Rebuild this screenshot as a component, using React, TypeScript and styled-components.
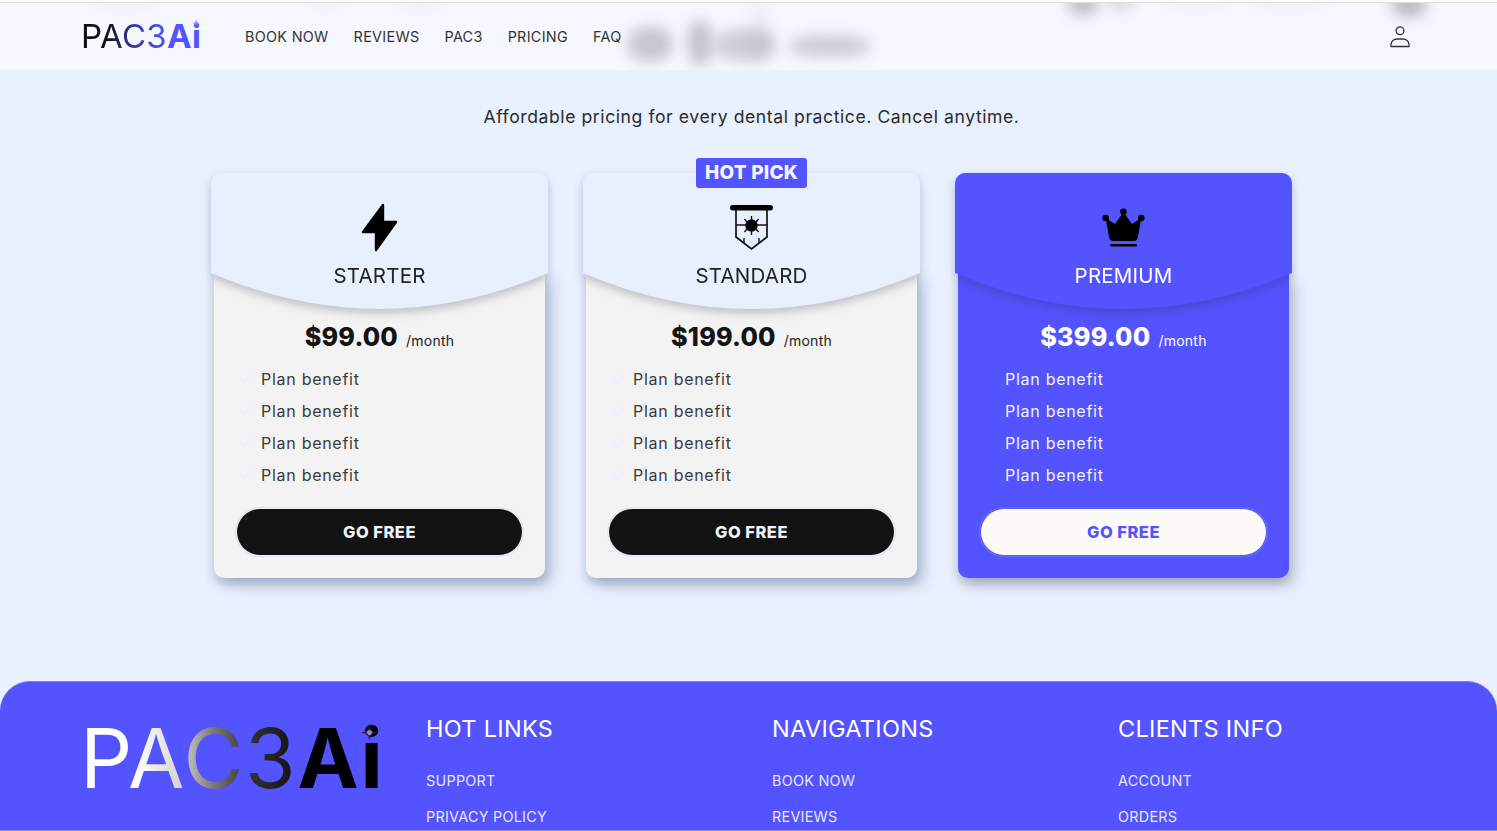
import React from "react";
import styled, { createGlobalStyle } from "styled-components";
import { Check } from "lucide-react";

const Global = createGlobalStyle`
  html, body { margin: 0; padding: 0; background: #e9f0fe; }
  * { box-sizing: border-box; }
`;

const font = `"Inter", "Noto Sans", "Liberation Sans", sans-serif`;
const brand = "#5353ff";

const Page = styled.div`
  width: 1497px;
  height: 831px;
  display: flex;
  flex-direction: column;
  overflow: hidden;
  background: #e9f0fe;
  font-family: ${font};
  color: #222;
`;

const TopEdge = styled.div`
  height: 3px;
  background: #fff;
  border-bottom: 1px solid #dcdfe0;
  flex: none;
`;

const Header = styled.header`
  position: relative;
  height: 67px;
  flex: none;
  display: flex;
  align-items: center;
  padding: 0 86px 0 81px;
  background: #f5f8ff;
  overflow: hidden;
`;

const Smudge = styled.div<{ $x: number; $y: number; $w: number; $h: number; $o: number }>`
  position: absolute;
  left: ${(p) => p.$x}px;
  top: ${(p) => p.$y}px;
  width: ${(p) => p.$w}px;
  height: ${(p) => p.$h}px;
  border-radius: 40%;
  background: rgba(60, 60, 70, ${(p) => p.$o});
  filter: blur(7px);
`;

const LogoWrap = styled.div<{ $size: number; $width: number; $track: number }>`
  position: relative;
  z-index: 1;
  display: inline-flex;
  flex: none;
  width: ${(p) => p.$width}px;
  font-size: ${(p) => p.$size}px;
  line-height: 1;
  letter-spacing: ${(p) => p.$track}px;
  font-weight: 400;
`;

const LogoLight = styled.span<{ $bg: string }>`
  background: ${(p) => p.$bg};
  -webkit-background-clip: text;
  background-clip: text;
  color: transparent;
`;

const LogoStrong = styled.span<{ $color: string }>`
  font-weight: 700;
  color: ${(p) => p.$color};
`;

const Spark = styled.svg<{ $left: number; $top: number; $size: number }>`
  position: absolute;
  left: ${(p) => p.$left}px;
  top: ${(p) => p.$top}px;
  width: ${(p) => p.$size}px;
  height: ${(p) => p.$size}px;
`;

const Nav = styled.nav`
  position: relative;
  z-index: 1;
  display: flex;
  gap: 25px;
  margin-left: 45px;
  font-size: 14.4px;
  color: #333;
  letter-spacing: 0.3px;
`;

const UserButton = styled.div`
  position: relative;
  z-index: 1;
  margin-left: auto;
  width: 22px;
  height: 22px;
  color: #333;
  display: flex;
`;

const Main = styled.main`
  flex: 1;
  display: flex;
  flex-direction: column;
  align-items: center;
  padding: 36px 0 0 6px;
`;

const Lead = styled.p`
  margin: 0;
  font-size: 17.6px;
  line-height: 22px;
  letter-spacing: 0.57px;
  color: #2b2b2b;
`;

const CardRow = styled.div`
  display: flex;
  gap: 35px;
  margin-top: 45px;
`;

const Card = styled.article`
  position: relative;
  width: 337px;
  height: 405px;
  display: flex;
  flex-direction: column;
`;

const CapWrap = styled.div`
  position: relative;
  z-index: 2;
  height: 136px;
  flex: none;
  filter: drop-shadow(0 4px 5px rgba(40, 40, 60, 0.26));
`;

const Cap = styled.div<{ $premium?: boolean }>`
  height: 136px;
  padding-top: 28px;
  display: flex;
  flex-direction: column;
  align-items: center;
  background: ${(p) => (p.$premium ? brand : "#e8f0fe")};
  color: ${(p) => (p.$premium ? "#fff" : "#222")};
  clip-path: path("M0 10 A10 10 0 0 1 10 0 H327 A10 10 0 0 1 337 10 V100 Q168.5 172 0 100 Z");
`;

const IconBox = styled.div<{ $drop: number }>`
  width: 48px;
  height: 52px;
  padding-top: ${(p) => p.$drop}px;
  display: flex;
  align-items: flex-start;
  justify-content: center;
`;

const PlanName = styled.h3`
  margin: 10px 0 0;
  font-size: 20.5px;
  line-height: 26px;
  font-weight: 400;
  letter-spacing: 0.2px;
`;

const Badge = styled.div`
  position: absolute;
  z-index: 3;
  top: -15px;
  left: 113px;
  width: 111px;
  height: 30px;
  border-radius: 3px;
  background: ${brand};
  color: #f4f6ff;
  font-size: 19px;
  line-height: 30px;
  font-weight: 800;
  text-align: center;
  letter-spacing: 0.2px;
`;

const Body = styled.div<{ $premium?: boolean }>`
  flex: 1;
  margin: -36px 3px 0;
  padding: 49px 23px 0;
  display: flex;
  flex-direction: column;
  border-radius: 0 0 10px 10px;
  background: ${(p) => (p.$premium ? brand : "#f3f3f3")};
  color: ${(p) => (p.$premium ? "#fff" : "#222")};
  box-shadow: ${(p) =>
    p.$premium
      ? "5px 7px 14px rgba(50,60,90,0.3), -2px 5px 9px rgba(50,60,90,0.14)"
      : "6px 7px 14px rgba(60,80,120,0.34), -2px 5px 9px rgba(60,80,120,0.16)"};
`;

const PriceLine = styled.div`
  display: flex;
  justify-content: center;
  align-items: baseline;
  gap: 8px;
  height: 30px;
`;

const Amount = styled.span<{ $premium?: boolean }>`
  font-size: 25.2px;
  line-height: 30px;
  font-weight: 800;
  letter-spacing: 0.2px;
  color: ${(p) => (p.$premium ? "#fff" : "#141414")};
`;

const Per = styled.span`
  font-size: 14px;
  letter-spacing: 0.25px;
`;

const Benefits = styled.ul`
  list-style: none;
  margin: 11px 0 0;
  padding: 0;
  display: flex;
  flex-direction: column;
`;

const Benefit = styled.li<{ $premium?: boolean }>`
  height: 32px;
  display: flex;
  align-items: center;
  gap: 6px;
  font-size: 16px;
  letter-spacing: 0.72px;
  color: ${(p) => (p.$premium ? "#f2f4ff" : "#3a3a3a")};
  svg {
    flex: none;
    color: ${(p) => (p.$premium ? brand : "#e6eefe")};
  }
`;

const Cta = styled.button<{ $premium?: boolean }>`
  margin: 18px 0 0;
  width: 285px;
  height: 46px;
  border: 0;
  border-radius: 23px;
  background: ${(p) => (p.$premium ? "#fcfbf8" : "#121212")};
  color: ${(p) => (p.$premium ? brand : "#eef2fd")};
  box-shadow: 0 0 0 1px ${(p) => (p.$premium ? brand : "#f3f3f3")},
    0 0 0 2px ${(p) => (p.$premium ? "#6d6dff" : "#dbe3f4")};
  font-family: ${font};
  font-size: 16.5px;
  font-weight: 800;
  letter-spacing: 0.5px;
`;

const Footer = styled.footer`
  height: 150px;
  flex: none;
  display: grid;
  grid-template-columns: 341px 346px 346px 1fr;
  padding: 33px 0 0 85px;
  background: ${brand};
  border-radius: 30px 30px 0 0;
  border-top: 1px solid #7c7cff;
  border-bottom: 1px solid #8a8aff;
  overflow: hidden;
  color: #fff;
`;

const FooterColumn = styled.div`
  display: flex;
  flex-direction: column;
`;

const FooterTitle = styled.h4`
  margin: 0 0 29px;
  font-size: 23.5px;
  line-height: 28px;
  font-weight: 400;
  letter-spacing: 0.3px;
`;

const FooterLink = styled.a`
  height: 36px;
  font-size: 14.4px;
  line-height: 18px;
  color: #e6e8ff;
  letter-spacing: 0.25px;
`;

const FooterLogoSlot = styled.div`
  margin: 3px 0 0 -5px;
`;

const Logo = ({ footer }: { footer?: boolean }) => (
  <LogoWrap $size={footer ? 82 : 33} $width={footer ? 300 : 119} $track={footer ? 1.7 : 0.3}>
    <LogoLight
      $bg={
        footer
          ? "linear-gradient(90deg,#fff 0%,#fff 26%,#d8d8d8 45%,#777 62%,#333 78%,#111 100%)"
          : "linear-gradient(90deg,#0c0c14 0%,#111 30%,#33338f 58%,#5353ff 100%)"
      }
    >
      PAC3
    </LogoLight>
    <LogoStrong $color={footer ? "#000" : brand}>Ai</LogoStrong>
    <Spark viewBox="0 0 20 20" $left={footer ? 281 : 111} $top={footer ? 6 : -1} $size={footer ? 17 : 8}>
      <path d="M10 0 L12 8 L20 10 L12 12 L10 20 L8 12 L0 10 L8 8 Z" fill={footer ? "#20204a" : "#8f8fff"} />
      {footer && <circle cx="10" cy="10" r="3" fill="#8d8db8" />}
    </Spark>
  </LogoWrap>
);

const Bolt = () => (
  <svg width="37" height="49" viewBox="0 0 37 49" fill="#000" stroke="#000" strokeWidth="2.4" strokeLinejoin="round">
    <path d="M22 2 L2 29 H15 L15 47 L35 19 H22 Z" />
  </svg>
);

const Shield = () => (
  <svg width="46" height="46" viewBox="0 0 46 46" fill="none" stroke="#111" strokeWidth="1.4">
    <rect x="1" y="0" width="43" height="5.5" rx="2.7" fill="#000" stroke="none" />
    <path d="M7 5 V32 L22.5 44 L38 32 V5" strokeWidth="1.7" />
    <path d="M7 20 H38" />
    <circle cx="22.5" cy="20.5" r="6.2" fill="#000" stroke="none" />
    <path d="M22.5 11 V15 M22.5 26 V30 M15.5 14 L18 17 M29.5 14 L27 17 M15.5 27 L18 24 M29.5 27 L27 24" />
    <path d="M15 33 V38 M30 33 V38" />
  </svg>
);

const Crown = () => (
  <svg width="44" height="40" viewBox="0 0 44 40" fill="#000">
    <circle cx="3.7" cy="10" r="3.3" />
    <circle cx="21.5" cy="3.7" r="3.3" />
    <circle cx="39.3" cy="10" r="3.3" />
    <path d="M3.7 10 L7 29 Q7.8 33 11 33 H32 Q35.2 33 36 29 L39.3 10 L30 16 L21.5 4 L13 16 Z" />
    <rect x="8" y="36" width="27" height="2.6" rx="1.3" />
  </svg>
);

const UserIcon = () => (
  <svg width="22" height="22" viewBox="0 0 22 22" fill="none" stroke="currentColor" strokeWidth="1.3">
    <circle cx="11" cy="4.8" r="3.9" />
    <path d="M2 20.5 V18.5 C2 15 5 13 8 13 H14 C17 13 20 15 20 18.5 V20.5 Z" strokeLinejoin="round" />
  </svg>
);

type Plan = { name: string; price: string; icon: React.ReactNode; drop: number; premium?: boolean; hot?: boolean };

const plans: Plan[] = [
  { name: "STARTER", price: "$99.00", icon: <Bolt />, drop: 2 },
  { name: "STANDARD", price: "$199.00", icon: <Shield />, drop: 4, hot: true },
  { name: "PREMIUM", price: "$399.00", icon: <Crown />, drop: 7, premium: true },
];

const navItems = ["BOOK NOW", "REVIEWS", "PAC3", "PRICING", "FAQ"];

const smudges = [
  { x: 628, y: 24, w: 44, h: 34, o: 0.26 },
  { x: 688, y: 18, w: 24, h: 44, o: 0.28 },
  { x: 716, y: 26, w: 60, h: 32, o: 0.22 },
  { x: 790, y: 32, w: 80, h: 22, o: 0.22 },
  { x: 750, y: -8, w: 18, h: 70, o: 0.05 },
  { x: 1068, y: -10, w: 30, h: 22, o: 0.3 },
  { x: 1108, y: -10, w: 26, h: 18, o: 0.16 },
  { x: 1160, y: -8, w: 70, h: 12, o: 0.05 },
  { x: 1250, y: -8, w: 80, h: 12, o: 0.05 },
  { x: 1392, y: -10, w: 34, h: 24, o: 0.32 },
  { x: 88, y: -8, w: 70, h: 12, o: 0.05 },
  { x: 310, y: -8, w: 34, h: 12, o: 0.06 },
  { x: 395, y: -8, w: 50, h: 12, o: 0.06 },
];

const footerColumns = [
  { title: "HOT LINKS", links: ["SUPPORT", "PRIVACY POLICY"] },
  { title: "NAVIGATIONS", links: ["BOOK NOW", "REVIEWS"] },
  { title: "CLIENTS INFO", links: ["ACCOUNT", "ORDERS"] },
];

export default function App() {
  return (
    <Page>
      <Global />
      <TopEdge />
      <Header>
        {smudges.map((s) => (
          <Smudge key={s.x} $x={s.x} $y={s.y} $w={s.w} $h={s.h} $o={s.o} />
        ))}
        <Logo />
        <Nav>
          {navItems.map((n) => (
            <span key={n}>{n}</span>
          ))}
        </Nav>
        <UserButton>
          <UserIcon />
        </UserButton>
      </Header>
      <Main>
        <Lead>Affordable pricing for every dental practice. Cancel anytime.</Lead>
        <CardRow>
          {plans.map((plan) => (
            <Card key={plan.name}>
              {plan.hot && <Badge>HOT PICK</Badge>}
              <CapWrap>
                <Cap $premium={plan.premium}>
                  <IconBox $drop={plan.drop}>{plan.icon}</IconBox>
                  <PlanName>{plan.name}</PlanName>
                </Cap>
              </CapWrap>
              <Body $premium={plan.premium}>
                <PriceLine>
                  <Amount $premium={plan.premium}>{plan.price}</Amount>
                  <Per>/month</Per>
                </PriceLine>
                <Benefits>
                  {[0, 1, 2, 3].map((i) => (
                    <Benefit key={i} $premium={plan.premium}>
                      <Check size={18} strokeWidth={1.8} />
                      Plan benefit
                    </Benefit>
                  ))}
                </Benefits>
                <Cta $premium={plan.premium}>GO FREE</Cta>
              </Body>
            </Card>
          ))}
        </CardRow>
      </Main>
      <Footer>
        <FooterLogoSlot>
          <Logo footer />
        </FooterLogoSlot>
        {footerColumns.map((c) => (
          <FooterColumn key={c.title}>
            <FooterTitle>{c.title}</FooterTitle>
            {c.links.map((l) => (
              <FooterLink key={l}>{l}</FooterLink>
            ))}
          </FooterColumn>
        ))}
      </Footer>
    </Page>
  );
}
